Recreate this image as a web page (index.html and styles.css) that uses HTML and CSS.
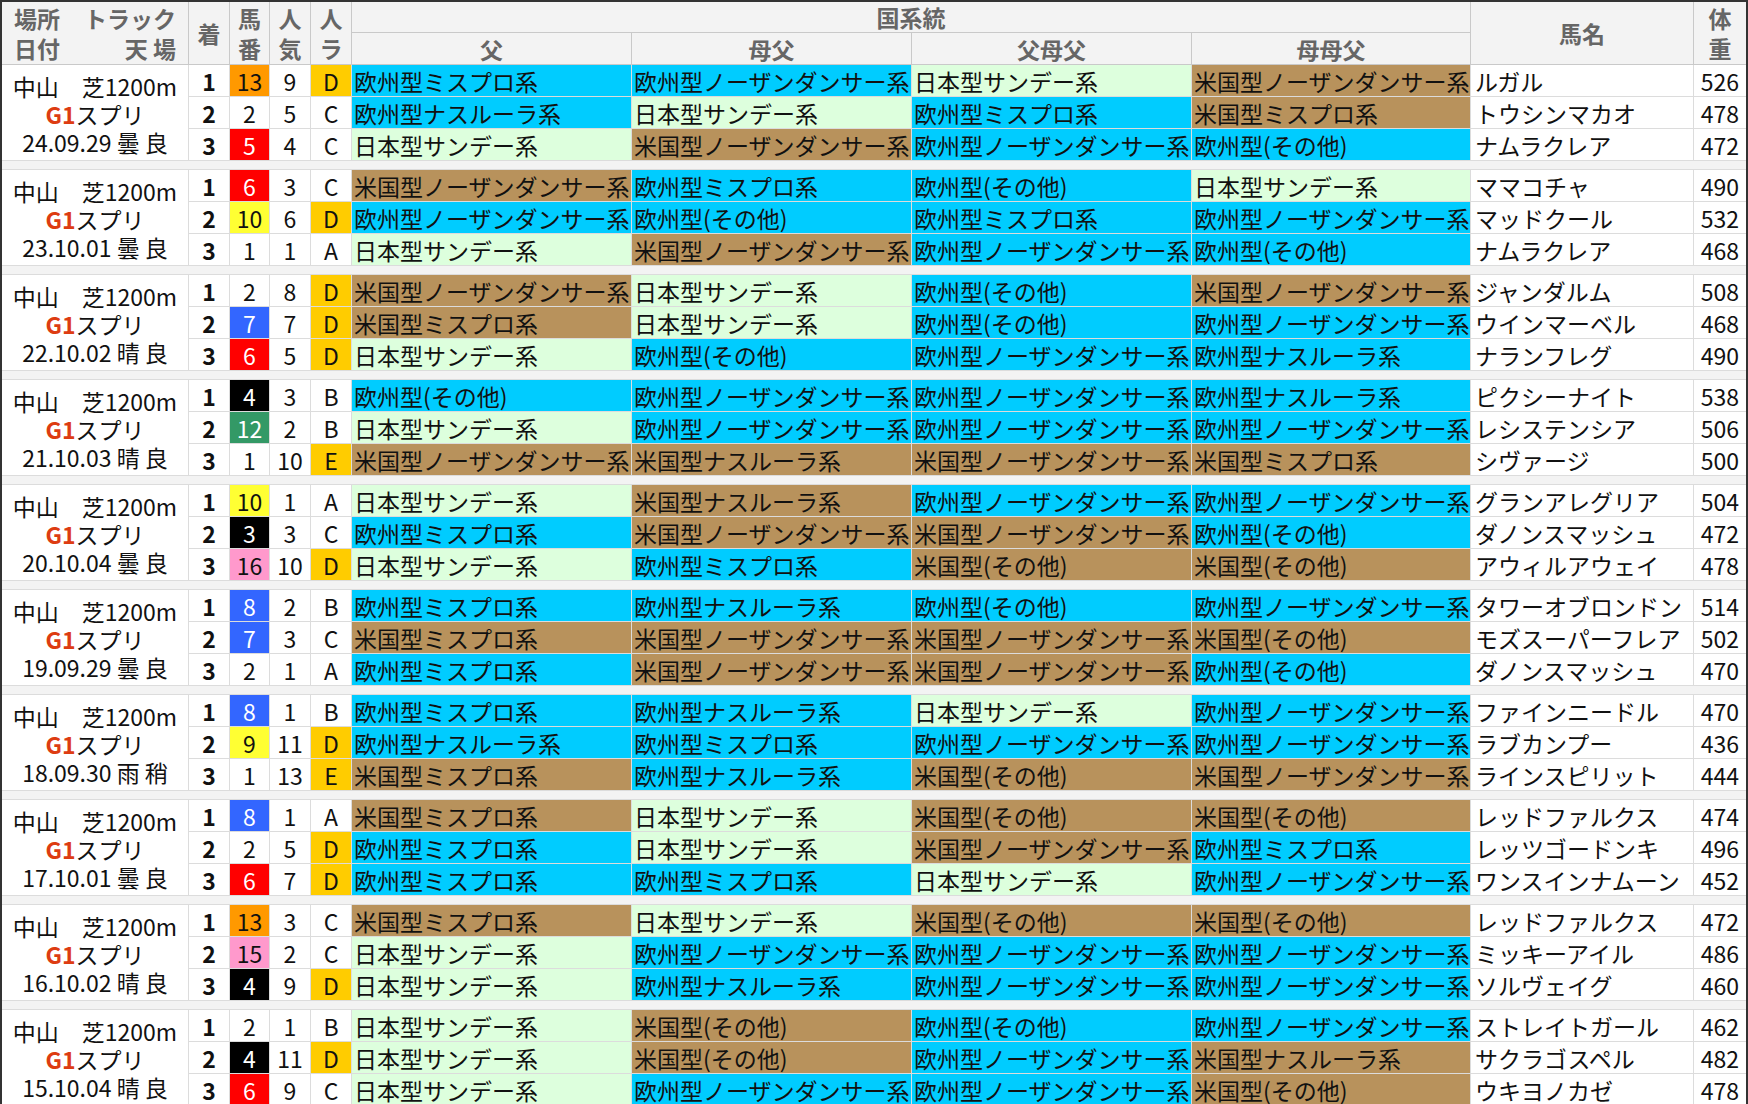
FILE: index.html
```html
<!DOCTYPE html>
<html lang="ja">
<head>
<meta charset="utf-8">
<title>スプリンターズS 血統</title>
<link rel="stylesheet" href="styles.css">
</head>
<body>
<table class="tbl">
<colgroup>
<col class="c-race"><col class="c-ch"><col class="c-num"><col class="c-pop"><col class="c-rank">
<col class="c-pd"><col class="c-pd"><col class="c-pd"><col class="c-pd4">
<col class="c-name"><col class="c-wt">
</colgroup>
<thead>
<tr class="h1">
<th rowspan="2" class="hrace"><div class="hl"><span>場所</span><span>トラック</span></div><div class="hl"><span>日付</span><span>天 場</span></div></th>
<th rowspan="2">着</th>
<th rowspan="2">馬<br>番</th>
<th rowspan="2">人<br>気</th>
<th rowspan="2">人<br>ラ</th>
<th colspan="4">国系統</th>
<th rowspan="2">馬名</th>
<th rowspan="2" class="last">体<br>重</th>
</tr>
<tr class="h2">
<th>父</th><th>母父</th><th>父母父</th><th>母母父</th>
</tr>
</thead>
<tbody>
<!-- 2024 -->
<tr class="r"><td class="race" rowspan="3"><div>中山　芝1200m</div><div><span class="g1">G1</span>スプリ</div><div>24.09.29 曇 良</div></td>
<td class="ch">1</td><td class="num w7">13</td><td class="ct">9</td><td class="ct hi">D</td>
<td class="pd o">欧州型ミスプロ系</td><td class="pd o">欧州型ノーザンダンサー系</td><td class="pd j">日本型サンデー系</td><td class="pd b">米国型ノーザンダンサー系</td>
<td class="nm">ルガル</td><td class="ct last">526</td></tr>
<tr class="r"><td class="ch">2</td><td class="num">2</td><td class="ct">5</td><td class="ct">C</td>
<td class="pd o">欧州型ナスルーラ系</td><td class="pd j">日本型サンデー系</td><td class="pd o">欧州型ミスプロ系</td><td class="pd b">米国型ミスプロ系</td>
<td class="nm">トウシンマカオ</td><td class="ct last">478</td></tr>
<tr class="r"><td class="ch">3</td><td class="num w3">5</td><td class="ct">4</td><td class="ct">C</td>
<td class="pd j">日本型サンデー系</td><td class="pd b">米国型ノーザンダンサー系</td><td class="pd o">欧州型ノーザンダンサー系</td><td class="pd o">欧州型(その他)</td>
<td class="nm">ナムラクレア</td><td class="ct last">472</td></tr>
<tr class="sp"><td colspan="11" class="last"></td></tr>
<!-- 2023 -->
<tr class="r"><td class="race" rowspan="3"><div>中山　芝1200m</div><div><span class="g1">G1</span>スプリ</div><div>23.10.01 曇 良</div></td>
<td class="ch">1</td><td class="num w3">6</td><td class="ct">3</td><td class="ct">C</td>
<td class="pd b">米国型ノーザンダンサー系</td><td class="pd o">欧州型ミスプロ系</td><td class="pd o">欧州型(その他)</td><td class="pd j">日本型サンデー系</td>
<td class="nm">ママコチャ</td><td class="ct last">490</td></tr>
<tr class="r"><td class="ch">2</td><td class="num w5">10</td><td class="ct">6</td><td class="ct hi">D</td>
<td class="pd o">欧州型ノーザンダンサー系</td><td class="pd o">欧州型(その他)</td><td class="pd o">欧州型ミスプロ系</td><td class="pd o">欧州型ノーザンダンサー系</td>
<td class="nm">マッドクール</td><td class="ct last">532</td></tr>
<tr class="r"><td class="ch">3</td><td class="num">1</td><td class="ct">1</td><td class="ct">A</td>
<td class="pd j">日本型サンデー系</td><td class="pd b">米国型ノーザンダンサー系</td><td class="pd o">欧州型ノーザンダンサー系</td><td class="pd o">欧州型(その他)</td>
<td class="nm">ナムラクレア</td><td class="ct last">468</td></tr>
<tr class="sp"><td colspan="11" class="last"></td></tr>
<!-- 2022 -->
<tr class="r"><td class="race" rowspan="3"><div>中山　芝1200m</div><div><span class="g1">G1</span>スプリ</div><div>22.10.02 晴 良</div></td>
<td class="ch">1</td><td class="num">2</td><td class="ct">8</td><td class="ct hi">D</td>
<td class="pd b">米国型ノーザンダンサー系</td><td class="pd j">日本型サンデー系</td><td class="pd o">欧州型(その他)</td><td class="pd b">米国型ノーザンダンサー系</td>
<td class="nm">ジャンダルム</td><td class="ct last">508</td></tr>
<tr class="r"><td class="ch">2</td><td class="num w4">7</td><td class="ct">7</td><td class="ct hi">D</td>
<td class="pd b">米国型ミスプロ系</td><td class="pd j">日本型サンデー系</td><td class="pd o">欧州型(その他)</td><td class="pd o">欧州型ノーザンダンサー系</td>
<td class="nm">ウインマーベル</td><td class="ct last">468</td></tr>
<tr class="r"><td class="ch">3</td><td class="num w3">6</td><td class="ct">5</td><td class="ct hi">D</td>
<td class="pd j">日本型サンデー系</td><td class="pd o">欧州型(その他)</td><td class="pd o">欧州型ノーザンダンサー系</td><td class="pd o">欧州型ナスルーラ系</td>
<td class="nm">ナランフレグ</td><td class="ct last">490</td></tr>
<tr class="sp"><td colspan="11" class="last"></td></tr>
<!-- 2021 -->
<tr class="r"><td class="race" rowspan="3"><div>中山　芝1200m</div><div><span class="g1">G1</span>スプリ</div><div>21.10.03 晴 良</div></td>
<td class="ch">1</td><td class="num w2">4</td><td class="ct">3</td><td class="ct">B</td>
<td class="pd o">欧州型(その他)</td><td class="pd o">欧州型ノーザンダンサー系</td><td class="pd o">欧州型ノーザンダンサー系</td><td class="pd o">欧州型ナスルーラ系</td>
<td class="nm">ピクシーナイト</td><td class="ct last">538</td></tr>
<tr class="r"><td class="ch">2</td><td class="num w6">12</td><td class="ct">2</td><td class="ct">B</td>
<td class="pd j">日本型サンデー系</td><td class="pd o">欧州型ノーザンダンサー系</td><td class="pd o">欧州型ノーザンダンサー系</td><td class="pd o">欧州型ノーザンダンサー系</td>
<td class="nm">レシステンシア</td><td class="ct last">506</td></tr>
<tr class="r"><td class="ch">3</td><td class="num">1</td><td class="ct">10</td><td class="ct hi">E</td>
<td class="pd b">米国型ノーザンダンサー系</td><td class="pd b">米国型ナスルーラ系</td><td class="pd b">米国型ノーザンダンサー系</td><td class="pd b">米国型ミスプロ系</td>
<td class="nm">シヴァージ</td><td class="ct last">500</td></tr>
<tr class="sp"><td colspan="11" class="last"></td></tr>
<!-- 2020 -->
<tr class="r"><td class="race" rowspan="3"><div>中山　芝1200m</div><div><span class="g1">G1</span>スプリ</div><div>20.10.04 曇 良</div></td>
<td class="ch">1</td><td class="num w5">10</td><td class="ct">1</td><td class="ct">A</td>
<td class="pd j">日本型サンデー系</td><td class="pd b">米国型ナスルーラ系</td><td class="pd o">欧州型ノーザンダンサー系</td><td class="pd o">欧州型ノーザンダンサー系</td>
<td class="nm">グランアレグリア</td><td class="ct last">504</td></tr>
<tr class="r"><td class="ch">2</td><td class="num w2">3</td><td class="ct">3</td><td class="ct">C</td>
<td class="pd o">欧州型ミスプロ系</td><td class="pd b">米国型ノーザンダンサー系</td><td class="pd b">米国型ノーザンダンサー系</td><td class="pd o">欧州型(その他)</td>
<td class="nm">ダノンスマッシュ</td><td class="ct last">472</td></tr>
<tr class="r"><td class="ch">3</td><td class="num w8">16</td><td class="ct">10</td><td class="ct hi">D</td>
<td class="pd j">日本型サンデー系</td><td class="pd o">欧州型ミスプロ系</td><td class="pd b">米国型(その他)</td><td class="pd b">米国型(その他)</td>
<td class="nm">アウィルアウェイ</td><td class="ct last">478</td></tr>
<tr class="sp"><td colspan="11" class="last"></td></tr>
<!-- 2019 -->
<tr class="r"><td class="race" rowspan="3"><div>中山　芝1200m</div><div><span class="g1">G1</span>スプリ</div><div>19.09.29 曇 良</div></td>
<td class="ch">1</td><td class="num w4">8</td><td class="ct">2</td><td class="ct">B</td>
<td class="pd o">欧州型ミスプロ系</td><td class="pd o">欧州型ナスルーラ系</td><td class="pd o">欧州型(その他)</td><td class="pd o">欧州型ノーザンダンサー系</td>
<td class="nm">タワーオブロンドン</td><td class="ct last">514</td></tr>
<tr class="r"><td class="ch">2</td><td class="num w4">7</td><td class="ct">3</td><td class="ct">C</td>
<td class="pd b">米国型ミスプロ系</td><td class="pd b">米国型ノーザンダンサー系</td><td class="pd b">米国型ノーザンダンサー系</td><td class="pd b">米国型(その他)</td>
<td class="nm">モズスーパーフレア</td><td class="ct last">502</td></tr>
<tr class="r"><td class="ch">3</td><td class="num">2</td><td class="ct">1</td><td class="ct">A</td>
<td class="pd o">欧州型ミスプロ系</td><td class="pd b">米国型ノーザンダンサー系</td><td class="pd b">米国型ノーザンダンサー系</td><td class="pd o">欧州型(その他)</td>
<td class="nm">ダノンスマッシュ</td><td class="ct last">470</td></tr>
<tr class="sp"><td colspan="11" class="last"></td></tr>
<!-- 2018 -->
<tr class="r"><td class="race" rowspan="3"><div>中山　芝1200m</div><div><span class="g1">G1</span>スプリ</div><div>18.09.30 雨 稍</div></td>
<td class="ch">1</td><td class="num w4">8</td><td class="ct">1</td><td class="ct">B</td>
<td class="pd o">欧州型ミスプロ系</td><td class="pd o">欧州型ナスルーラ系</td><td class="pd j">日本型サンデー系</td><td class="pd o">欧州型ノーザンダンサー系</td>
<td class="nm">ファインニードル</td><td class="ct last">470</td></tr>
<tr class="r"><td class="ch">2</td><td class="num w5">9</td><td class="ct">11</td><td class="ct hi">D</td>
<td class="pd o">欧州型ナスルーラ系</td><td class="pd o">欧州型ミスプロ系</td><td class="pd o">欧州型ノーザンダンサー系</td><td class="pd o">欧州型ノーザンダンサー系</td>
<td class="nm">ラブカンプー</td><td class="ct last">436</td></tr>
<tr class="r"><td class="ch">3</td><td class="num">1</td><td class="ct">13</td><td class="ct hi">E</td>
<td class="pd b">米国型ミスプロ系</td><td class="pd o">欧州型ナスルーラ系</td><td class="pd b">米国型(その他)</td><td class="pd b">米国型ノーザンダンサー系</td>
<td class="nm">ラインスピリット</td><td class="ct last">444</td></tr>
<tr class="sp"><td colspan="11" class="last"></td></tr>
<!-- 2017 -->
<tr class="r"><td class="race" rowspan="3"><div>中山　芝1200m</div><div><span class="g1">G1</span>スプリ</div><div>17.10.01 曇 良</div></td>
<td class="ch">1</td><td class="num w4">8</td><td class="ct">1</td><td class="ct">A</td>
<td class="pd b">米国型ミスプロ系</td><td class="pd j">日本型サンデー系</td><td class="pd b">米国型(その他)</td><td class="pd b">米国型(その他)</td>
<td class="nm">レッドファルクス</td><td class="ct last">474</td></tr>
<tr class="r"><td class="ch">2</td><td class="num">2</td><td class="ct">5</td><td class="ct hi">D</td>
<td class="pd o">欧州型ミスプロ系</td><td class="pd j">日本型サンデー系</td><td class="pd b">米国型ノーザンダンサー系</td><td class="pd o">欧州型ミスプロ系</td>
<td class="nm">レッツゴードンキ</td><td class="ct last">496</td></tr>
<tr class="r"><td class="ch">3</td><td class="num w3">6</td><td class="ct">7</td><td class="ct hi">D</td>
<td class="pd o">欧州型ミスプロ系</td><td class="pd o">欧州型ミスプロ系</td><td class="pd j">日本型サンデー系</td><td class="pd o">欧州型ノーザンダンサー系</td>
<td class="nm">ワンスインナムーン</td><td class="ct last">452</td></tr>
<tr class="sp"><td colspan="11" class="last"></td></tr>
<!-- 2016 -->
<tr class="r"><td class="race" rowspan="3"><div>中山　芝1200m</div><div><span class="g1">G1</span>スプリ</div><div>16.10.02 晴 良</div></td>
<td class="ch">1</td><td class="num w7">13</td><td class="ct">3</td><td class="ct">C</td>
<td class="pd b">米国型ミスプロ系</td><td class="pd j">日本型サンデー系</td><td class="pd b">米国型(その他)</td><td class="pd b">米国型(その他)</td>
<td class="nm">レッドファルクス</td><td class="ct last">472</td></tr>
<tr class="r"><td class="ch">2</td><td class="num w8">15</td><td class="ct">2</td><td class="ct">C</td>
<td class="pd j">日本型サンデー系</td><td class="pd o">欧州型ノーザンダンサー系</td><td class="pd o">欧州型ノーザンダンサー系</td><td class="pd o">欧州型ノーザンダンサー系</td>
<td class="nm">ミッキーアイル</td><td class="ct last">486</td></tr>
<tr class="r"><td class="ch">3</td><td class="num w2">4</td><td class="ct">9</td><td class="ct hi">D</td>
<td class="pd j">日本型サンデー系</td><td class="pd o">欧州型ナスルーラ系</td><td class="pd o">欧州型ノーザンダンサー系</td><td class="pd o">欧州型ノーザンダンサー系</td>
<td class="nm">ソルヴェイグ</td><td class="ct last">460</td></tr>
<tr class="sp"><td colspan="11" class="last"></td></tr>
<!-- 2015 -->
<tr class="r"><td class="race" rowspan="3"><div>中山　芝1200m</div><div><span class="g1">G1</span>スプリ</div><div>15.10.04 晴 良</div></td>
<td class="ch">1</td><td class="num">2</td><td class="ct">1</td><td class="ct">B</td>
<td class="pd j">日本型サンデー系</td><td class="pd b">米国型(その他)</td><td class="pd o">欧州型(その他)</td><td class="pd o">欧州型ノーザンダンサー系</td>
<td class="nm">ストレイトガール</td><td class="ct last">462</td></tr>
<tr class="r"><td class="ch">2</td><td class="num w2">4</td><td class="ct">11</td><td class="ct hi">D</td>
<td class="pd j">日本型サンデー系</td><td class="pd b">米国型(その他)</td><td class="pd o">欧州型ノーザンダンサー系</td><td class="pd b">米国型ナスルーラ系</td>
<td class="nm">サクラゴスペル</td><td class="ct last">482</td></tr>
<tr class="r"><td class="ch">3</td><td class="num w3">6</td><td class="ct">9</td><td class="ct">C</td>
<td class="pd j">日本型サンデー系</td><td class="pd o">欧州型ノーザンダンサー系</td><td class="pd o">欧州型ノーザンダンサー系</td><td class="pd b">米国型(その他)</td>
<td class="nm">ウキヨノカゼ</td><td class="ct last">478</td></tr>
</tbody>
</table>
</body>
</html>
```

FILE: styles.css
```css
html, body {
  margin: 0;
  padding: 0;
  background: #ffffff;
}

body {
  font-family: "Noto Sans CJK JP", "Noto Sans", sans-serif;
  color: #111111;
}

.tbl {
  border-spacing: 0;
  table-layout: fixed;
  width: 1748px;
  border-top: 2px solid #333333;
  border-left: 2px solid #333333;
  border-right: 2px solid #333333;
  font-size: 23px;
}

.c-race { width: 187px; }
.c-ch { width: 41px; }
.c-num { width: 40px; }
.c-pop { width: 41px; }
.c-rank { width: 41px; }
.c-pd { width: 280px; }
.c-pd4 { width: 279px; }
.c-name { width: 223px; }
.c-wt { width: 52px; }

.tbl th,
.tbl td {
  padding: 0;
  border-right: 1px solid #dcdcdc;
  border-bottom: 1px solid #dcdcdc;
  vertical-align: middle;
  white-space: nowrap;
  line-height: 30px;
}

.tbl td {
  overflow: hidden;
}

.tbl th {
  background: #f3f3f3;
  color: #666666;
  font-weight: bold;
  text-align: center;
  border-color: #c9c9c9;
}

.tbl .last {
  border-right: 0;
}

.h1 { height: 29px; }
.h2 { height: 32px; }
.r { height: 32px; }

.hrace {
  padding: 0 12px 0 12px !important;
}

.hl {
  display: flex;
  justify-content: space-between;
}

.race {
  text-align: center;
  line-height: 28px !important;
  padding-top: 2px !important;
}

.g1 {
  color: #dd3c12;
  font-weight: bold;
}

.ch {
  text-align: center;
  font-weight: bold;
}

.ct {
  text-align: center;
}

.num {
  text-align: center;
}

.nm {
  padding-left: 4px !important;
}

.pd {
  padding-left: 2px !important;
}

.sp td {
  height: 8px;
  line-height: 0;
  font-size: 0;
  background: #f3f3f3;
}

/* pedigree type colours */
.o { background: #00ccff; }
.b { background: #b8925c; }
.j { background: #ddffdd; }

/* popularity rank highlight */
.hi { background: #ffcc00; }

/* frame colours for horse numbers */
.w2 { background: #000000; color: #ffffff; }
.w3 { background: #ff0000; color: #ffffff; }
.w4 { background: #3366ff; color: #ffffff; }
.w5 { background: #ffff33; }
.w6 { background: #339966; color: #ffffff; }
.w7 { background: #ff9900; }
.w8 { background: #ff99cc; }
```
